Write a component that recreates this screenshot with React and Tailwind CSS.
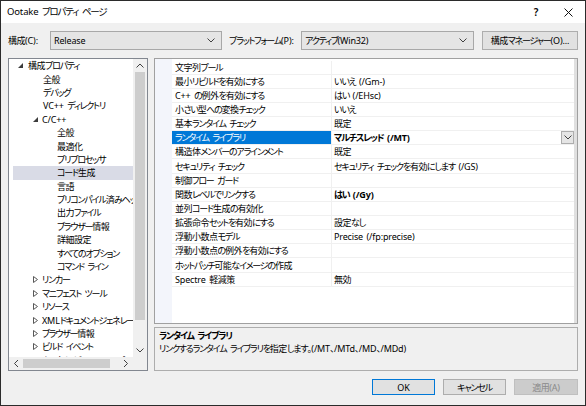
import React from "react";

// Yu Gothic UI has much narrower kana than Noto CJK, so squeeze the Japanese runs
const jp = (str) =>
  str.split(/( +|[\u3040-\u30ff]+|[\u3000-\u303f\u4e00-\u9fff\uff00-\uffef]+)/).map((part, i) => {
    if (!part) return null;
    if (/^ +$/.test(part)) return <span key={i} className="inline-block w-[3.5px]" />;
    if (/[\u3040-\u30ff]/.test(part)) return <span key={i} className="tracking-[-1.2px]">{part}</span>;
    if (/[\u3000-\u303f\u4e00-\u9fff\uff00-\uffef]/.test(part)) return <span key={i} className="tracking-[-0.5px]">{part}</span>;
    return <span key={i} className="tracking-[-0.15px]">{part}</span>;
  });

const Chevron = ({ className = "" }) => (
  <svg width="8" height="5" viewBox="0 0 8 5" className={className}>
    <path d="M0.5 0.5 L4 4 L7.5 0.5" fill="none" stroke="#404040" strokeWidth="1" />
  </svg>
);

const treeItems = [
  { label: "構成プロパティ", pad: 19, exp: "open", ex: 9 },
  { label: "全般", pad: 34 },
  { label: "デバッグ", pad: 34 },
  { label: "VC++ ディレクトリ", pad: 34 },
  { label: "C/C++", pad: 33, exp: "open", ex: 24 },
  { label: "全般", pad: 48 },
  { label: "最適化", pad: 48 },
  { label: "プリプロセッサ", pad: 48 },
  { label: "コード生成", pad: 48, selected: true },
  { label: "言語", pad: 48 },
  { label: "プリコンパイル済みヘッダー", pad: 48 },
  { label: "出力ファイル", pad: 48 },
  { label: "ブラウザー情報", pad: 48 },
  { label: "詳細設定", pad: 48 },
  { label: "すべてのオプション", pad: 48 },
  { label: "コマンド ライン", pad: 48 },
  { label: "リンカー", pad: 33, exp: "closed", ex: 24 },
  { label: "マニフェスト ツール", pad: 33, exp: "closed", ex: 24 },
  { label: "リソース", pad: 33, exp: "closed", ex: 24 },
  { label: "XML ドキュメント ジェネレーター", pad: 33, exp: "closed", ex: 24 },
  { label: "ブラウザー情報", pad: 33, exp: "closed", ex: 24 },
  { label: "ビルド イベント", pad: 33, exp: "closed", ex: 24 },
  { label: "カスタム ビルド ステップ", pad: 33, exp: "closed", ex: 24 },
];

const props = [
  ["文字列プール", ""],
  ["最小リビルドを有効にする", "いいえ (/Gm-)"],
  ["C++ の例外を有効にする", "はい (/EHsc)"],
  ["小さい型への変換チェック", "いいえ"],
  ["基本ランタイム チェック", "既定"],
  ["ランタイム ライブラリ", "マルチスレッド (/MT)", "selected"],
  ["構造体メンバーのアラインメント", "既定"],
  ["セキュリティ チェック", "セキュリティ チェックを有効にします (/GS)"],
  ["制御フロー ガード", ""],
  ["関数レベルでリンクする", "はい (/Gy)", "bold"],
  ["並列コード生成の有効化", ""],
  ["拡張命令セットを有効にする", "設定なし"],
  ["浮動小数点モデル", "Precise (/fp:precise)"],
  ["浮動小数点の例外を有効にする", ""],
  ["ホットパッチ可能なイメージの作成", ""],
  ["Spectre 軽減策", "無効"],
];

const Expander = ({ type }) =>
  type === "open" ? (
    <svg width="5" height="5" viewBox="0 0 5 5">
      <path d="M5 0 L5 5 L0 5 Z" fill="#3c3c3c" />
    </svg>
  ) : (
    <svg width="5" height="7" viewBox="0 0 5 7">
      <path d="M0.5 0.5 L4.5 3.5 L0.5 6.5 Z" fill="none" stroke="#595959" strokeWidth="1" />
    </svg>
  );

const Tree = () => (
  <div className="w-[140px] h-full border border-[#828790] bg-white flex flex-col">
    <div className="flex-1 flex min-h-0">
      <div className="flex-1 overflow-hidden">
        {treeItems.map((item, i) => (
          <div
            key={i}
            className={`relative h-[13.4px] flex items-center whitespace-nowrap ${item.selected ? "bg-[#d9dbe6] ml-[4px]" : ""}`}
            style={{ paddingLeft: item.selected ? item.pad - 4 : item.pad }}
          >
            {item.exp && (
              <span className="absolute top-0 h-full flex items-center" style={{ left: item.selected ? item.ex - 4 : item.ex }}>
                <Expander type={item.exp} />
              </span>
            )}
            {jp(item.label)}
          </div>
        ))}
      </div>
      <div className="w-[14px] bg-[#f0f0f0] flex flex-col items-center">
        <div className="h-[13px] flex items-center justify-center">
          <Chevron className="rotate-180" />
        </div>
        <div className="w-[10px] h-[248px] bg-[#cdcdcd]" />
        <div className="flex-1" />
        <div className="h-[13px] flex items-center justify-center">
          <Chevron />
        </div>
      </div>
    </div>
    <div className="h-[13px] flex bg-[#f0f0f0]">
      <div className="flex-1 flex items-center">
        <div className="w-[14px] flex justify-center">
          <Chevron className="rotate-90" />
        </div>
        <div className="w-[87px] h-[9px] bg-[#cdcdcd]" />
        <div className="flex-1" />
        <div className="w-[14px] flex justify-center">
          <Chevron className="-rotate-90" />
        </div>
      </div>
      <div className="w-[14px]" />
    </div>
  </div>
);

const Grid = () => (
  <div className="flex-1 border border-[#a0a0a0] bg-white flex min-h-0">
    <div className="w-[17px] bg-[#f3f5fb]" />
    <div className="flex-1 pt-[1.5px] border-r-[3px] border-[#e0e0e0]">
      {props.map(([name, value, flag], i) => (
        <div key={i} className="h-[14.15px] flex border-b border-[#f0f0f0] whitespace-nowrap">
          <div
            className={`w-[160px] flex items-center pl-[3px] border-r border-[#f0f0f0] ${flag === "selected" ? "bg-[#0078d7] text-white" : ""}`}
          >
            {jp(name)}
          </div>
          <div className={`flex-1 flex items-center pl-[2px] ${flag ? "font-bold" : ""}`}>
            <span className="flex-1">{jp(value)}</span>
            {flag === "selected" && (
              <span className="w-[13px] h-[13px] border border-[#adadad] bg-[#e5e5e5] flex items-center justify-center">
                <Chevron />
              </span>
            )}
          </div>
        </div>
      ))}
    </div>
  </div>
);

const Combo = ({ value, width }) => (
  <div className={`${width} h-[19px] border border-[#a8a8a8] bg-[#e5e5e5] flex items-center pl-[3px] pr-[6px]`}>
    <span className="flex-1">{jp(value)}</span>
    <Chevron />
  </div>
);

export default function App() {
  return (
    <div className="w-[586px] h-[406px] border border-[#2b2b2b] bg-[#f0f0f0] flex flex-col text-[9px] leading-none text-black font-['Noto_Sans','Noto_Sans_CJK_JP',sans-serif] [font-feature-settings:'palt'] overflow-hidden">
      {/* title bar */}
      <div className="h-[22px] bg-white flex items-center pl-[6px] shrink-0">
        <span className="flex-1 text-[9.5px]">{jp("Ootake プロパティ ページ")}</span>
        <span className="w-[30px] text-center text-[10px] font-semibold">?</span>
        <span className="w-[34px] flex justify-center">
          <svg width="9" height="9" viewBox="0 0 9 9">
            <path d="M0.5 0.5 L8.5 8.5 M8.5 0.5 L0.5 8.5" stroke="#111" strokeWidth="1" />
          </svg>
        </span>
      </div>

      {/* configuration row */}
      <div className="flex items-center mt-[8px] pl-[7px] shrink-0 whitespace-nowrap">
        <span className="w-[42px]">{jp("構成(C):")}</span>
        <Combo value="Release" width="w-[172px]" />
        <span className="w-[72px] ml-[7px]">{jp("プラットフォーム(P):")}</span>
        <Combo value="アクティブ(Win32)" width="w-[173px]" />
        <button className="ml-[8px] w-[96px] h-[19px] border border-[#adadad] bg-[#e1e1e1]">
          {jp("構成マネージャー(O)...")}
        </button>
      </div>

      {/* main */}
      <div className="flex mt-[8px] pl-[7px] gap-[6px] h-[313px] shrink-0">
        <Tree />
        <div className="w-[424px] flex flex-col gap-[3px]">
          <Grid />
          <div className="h-[44px] border border-[#adadad] bg-[#f0f0f0] pl-[4px] pt-[3px] flex flex-col gap-[4px] whitespace-nowrap">
            <div className="font-bold">{jp("ランタイム ライブラリ")}</div>
            <div>{jp("リンクするランタイム ライブラリを指定します。(/MT、/MTd、/MD、/MDd)")}</div>
          </div>
        </div>
      </div>

      {/* buttons */}
      <div className="flex justify-end gap-[8px] mt-[8px] pr-[7px] shrink-0">
        <button className="w-[63px] h-[16px] border border-[#0078d7] bg-[#e1e1e1]">OK</button>
        <button className="w-[63px] h-[16px] border border-[#adadad] bg-[#e1e1e1]">{jp("キャンセル")}</button>
        <button className="w-[64px] h-[16px] border border-[#bfbfbf] bg-[#cccccc] text-[#8a8a8a]">{jp("適用(A)")}</button>
      </div>
    </div>
  );
}
